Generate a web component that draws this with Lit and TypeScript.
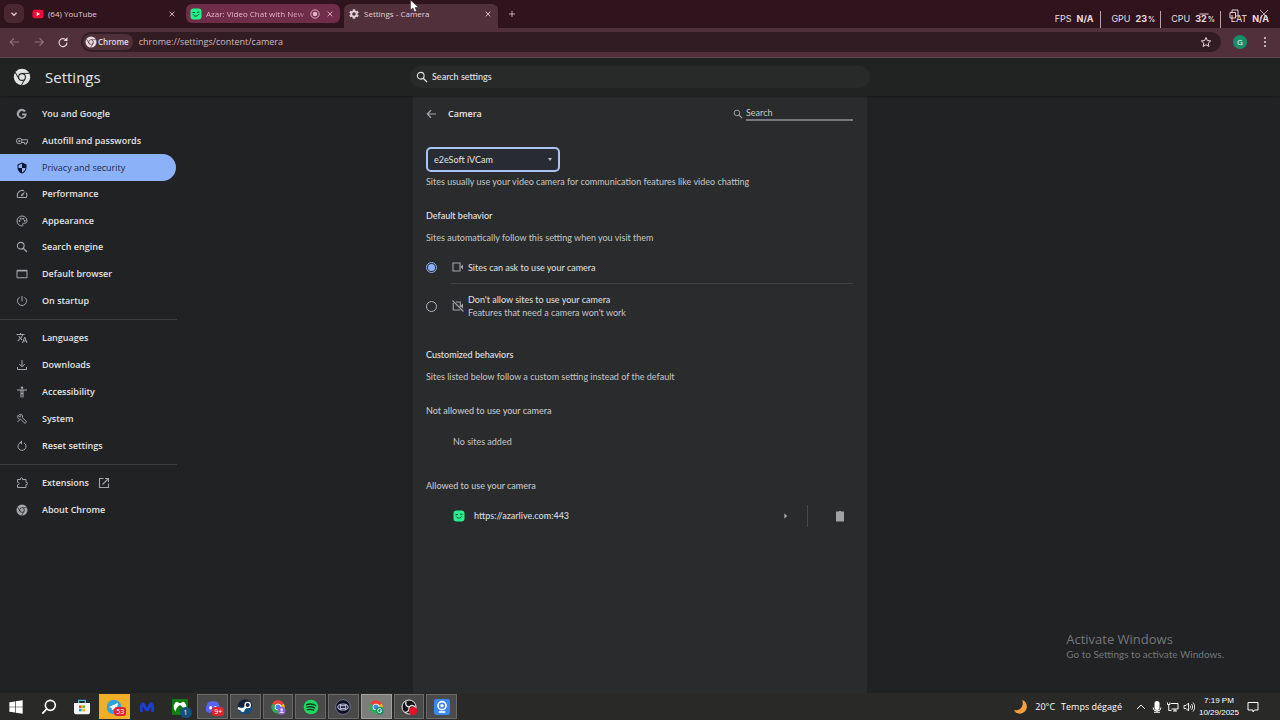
import { LitElement, html, svg, css, nothing, TemplateResult, SVGTemplateResult } from "lit";
import { customElement, state } from "lit/decorators.js";
import { classMap } from "lit/directives/class-map.js";

const wedge = svg`
  <path fill="#ea4335" d="M12 12 3.3 7A10 10 0 0 1 20.7 7z"/>
  <path fill="#fbbc04" d="M12 12 20.7 7A10 10 0 0 1 12 22z"/>
  <path fill="#34a853" d="M12 12 12 22A10 10 0 0 1 3.3 7z"/>
  <circle cx="12" cy="12" r="5" fill="#fff"/><circle cx="12" cy="12" r="3.8" fill="#4285f4"/>`;

const chromeMono = svg`
  <mask id="slits"><rect width="24" height="24" fill="#fff"/>
    <circle cx="12" cy="12" r="5.2" fill="#000"/>
    <g stroke="#000" stroke-width="1.2">
      <path d="M12 7.2H22"/><path d="M12 7.2H22" transform="rotate(120 12 12)"/><path d="M12 7.2H22" transform="rotate(240 12 12)"/>
    </g></mask>
  <circle cx="12" cy="12" r="11" fill="currentColor" mask="url(#slits)"/>
  <circle cx="12" cy="12" r="3.8" fill="currentColor"/>`;

const smile = svg`
  <rect x="1" y="1" width="22" height="22" rx="6" fill="#25f08c"/>
  <path d="M6 9h3M15 8.500h3M6.500 13.500c2 4 8 4 11-.5" fill="none" stroke="#134a35" stroke-width="2" stroke-linecap="round"/>`;

const ICONS: Record<string, SVGTemplateResult> = {
  chevronDown: svg`<path d="m6 9 6 6 6-6" fill="none" stroke="currentColor" stroke-width="3"/>`,
  close: svg`<path d="M5 5 19 19M19 5 5 19" fill="none" stroke="currentColor" stroke-width="2.600"/>`,
  windowClose: svg`<path d="M4 4 20 20M20 4 4 20" fill="none" stroke="currentColor" stroke-width="1.600"/>`,
  plus: svg`<path d="M12 3v18M3 12h18" fill="none" stroke="currentColor" stroke-width="2.400"/>`,
  youtube: svg`<rect x="1" y="3.500" width="22" height="17" rx="4" fill="#f5093a"/><path d="M9.500 8v8l6.500-4z" fill="#fff"/>`,
  smile,
  record: svg`<circle cx="12" cy="12" r="10" fill="none" stroke="currentColor" stroke-width="2.200"/><circle cx="12" cy="12" r="5.500" fill="currentColor"/>`,
  gear: svg`<path fill="currentColor" d="M19.140 12.940c.04-.3.060-.61.060-.94 0-.32-.02-.64-.07-.94l2.030-1.580a.49.490 0 0 0 .12-.61l-1.920-3.320a.49.490 0 0 0-.59-.22l-2.390.96c-.5-.38-1.030-.7-1.620-.94l-.36-2.540a.48.480 0 0 0-.48-.41h-3.840c-.24 0-.43.170-.47.410l-.36 2.540c-.59.240-1.130.57-1.620.94l-2.390-.96a.48.480 0 0 0-.59.220L2.740 8.870c-.12.210-.08.470.12.610l2.030 1.580c-.05.3-.09.630-.09.940s.02.640.07.940l-2.030 1.580a.49.490 0 0 0-.12.610l1.920 3.320c.12.220.37.290.59.220l2.390-.96c.5.380 1.030.7 1.620.94l.36 2.540c.05.240.24.410.48.410h3.840c.24 0 .44-.17.470-.41l.36-2.540c.59-.24 1.130-.56 1.620-.94l2.390.96c.22.080.47 0 .59-.22l1.920-3.320c.12-.22.070-.47-.12-.61zM12 15.600A3.600 3.600 0 1 1 12 8.400a3.600 3.600 0 0 1 0 7.200z"/>`,
  back: svg`<path d="M20 12H3M10 4.500 2.500 12l7.500 7.500" fill="none" stroke="currentColor" stroke-width="2.200"/>`,
  forward: svg`<path d="M3 12h17M13 4.500 20.500 12 13 19.500" fill="none" stroke="currentColor" stroke-width="2.200"/>`,
  reload: svg`<path d="M18.500 8.500A8 8 0 1 0 20 13" fill="none" stroke="currentColor" stroke-width="2.200"/><path d="M21 2.500v7.500h-7.500z" fill="currentColor"/>`,
  chrome: chromeMono,
  star: svg`<path d="m12 3 2.700 6.200 6.800.6-5.100 4.500 1.500 6.600L12 17.400l-5.900 3.500 1.500-6.600-5.100-4.500 6.800-.6z" fill="none" stroke="currentColor" stroke-width="2"/>`,
  dots: svg`<g fill="currentColor"><circle cx="12" cy="4" r="2"/><circle cx="12" cy="12" r="2"/><circle cx="12" cy="20" r="2"/></g>`,
  search: svg`<circle cx="9.500" cy="9.500" r="6.700" fill="none" stroke="currentColor" stroke-width="2.200"/><path d="m14 14 8 8" stroke="currentColor" stroke-width="2.600"/>`,
  google: svg`<path d="M20 6.200A10 10 0 1 0 21.500 11H12v3.600h5.400A5.800 5.800 0 1 1 16 8z" fill="currentColor" fill-rule="evenodd"/>`,
  key: svg`<g fill="none" stroke="currentColor" stroke-width="2"><circle cx="6.500" cy="12" r="5.500"/><path d="M12 9.500h11v5.500H21V18h-4v-3h-5"/></g><circle cx="6.500" cy="12" r="2.200" fill="currentColor"/>`,
  shield: svg`<path fill="currentColor" d="M12 1 3 5v6c0 5.550 3.840 10.740 9 12 5.160-1.260 9-6.450 9-12V5zm0 11h7c-.53 4.120-3.280 7.790-7 8.940V12H5V6.300l7-3.110z"/>`,
  gauge: svg`<path d="M16 5.500A10 10 0 0 0 3.500 19H20.500A10 10 0 0 0 20.500 9.500" fill="none" stroke="currentColor" stroke-width="2.200"/><path d="M19 6 13.500 15.500a2 2 0 1 1-3-2.500z" fill="currentColor"/>`,
  palette: svg`<path d="M12 2a10 10 0 0 0 0 20c1.400 0 2.200-1 1.800-2.200-.7-1.800.2-3.500 2-3.500H18c2.500 0 4-1.800 4-4.300C22 6 17.500 2 12 2z" fill="none" stroke="currentColor" stroke-width="2"/><g fill="currentColor"><circle cx="7" cy="12" r="1.800"/><circle cx="9.500" cy="7.500" r="1.800"/><circle cx="14.500" cy="7.500" r="1.800"/><circle cx="17.500" cy="11.500" r="1.800"/></g>`,
  window: svg`<path d="M2 4.500h20v15H2z" fill="none" stroke="currentColor" stroke-width="2"/><path d="M2 5.500h20" stroke="currentColor" stroke-width="3"/>`,
  power: svg`<path d="M12 2v10.500M7 4.500a9 9 0 1 0 10 0" fill="none" stroke="currentColor" stroke-width="2"/>`,
  translate: svg`<path fill="currentColor" d="m12.870 15.070-2.540-2.510.03-.03A17.520 17.520 0 0 0 14.070 6H17V4h-7V2H8v2H1v2h11.170C11.500 7.920 10.440 9.750 9 11.350 8.070 10.320 7.300 9.190 6.690 8h-2c.73 1.630 1.730 3.170 2.980 4.560l-5.090 5.020L4 19l5-5 3.110 3.110zM18.500 10h-2L12 22h2l1.120-3h4.750L21 22h2zm-2.620 7 1.620-4.330L19.120 17z"/>`,
  download: svg`<path d="M12 2v13M6.500 10l5.500 5.500 5.500-5.500M3 16v5h18v-5" fill="none" stroke="currentColor" stroke-width="2"/>`,
  person: svg`<circle cx="12" cy="3.500" r="2.500" fill="currentColor"/><path d="M2 8h20" stroke="currentColor" stroke-width="2.200"/><path d="M10 8v15M14 8v15M10 15h4" fill="none" stroke="currentColor" stroke-width="2.200"/>`,
  wrench: svg`<path d="M4 4.500 8 8.500 9 5.500 6.500 3c4-1.500 8 1.500 6.500 6.500l8 8-3 3.500-8.500-8.500C5 14 2 9 4 4.500zM3 18l4-4" fill="none" stroke="currentColor" stroke-width="2"/>`,
  reset: svg`<path d="M8 5.800a8 8 0 1 0 8 0" fill="none" stroke="currentColor" stroke-width="2"/><path d="M12 1v8L7 5z" fill="currentColor"/>`,
  puzzle: svg`<path d="M3 5h6V3.500a2 2 0 0 1 4 0V5h7v6h1.500a2 2 0 0 1 0 4H20v6H3v-5.500c4.500-.5 4.500-4.500 0-5z" fill="none" stroke="currentColor" stroke-width="2"/>`,
  external: svg`<path d="M11 3H3v18h18v-8M14 3h7v7M21 3 9 15" fill="none" stroke="currentColor" stroke-width="2.200"/>`,
  camera: svg`<path d="M2 4h14v16H2z" fill="none" stroke="currentColor" stroke-width="2.200"/><path d="M16.500 12 22 7v10z" fill="currentColor"/>`,
  cameraOff: svg`<path d="M8 4h8.500v10M2.500 6v14h14" fill="none" stroke="currentColor" stroke-width="2.200"/><path d="M16.500 12 22 7v10z" fill="currentColor"/><path d="m1 1 22 22" stroke="currentColor" stroke-width="2.200"/>`,
  arrowRight: svg`<path d="m8 6 7 6-7 6z" fill="currentColor"/>`,
  trash: svg`<path d="M4 6h16v16a1 1 0 0 1-1 1H5a1 1 0 0 1-1-1zM4 3h5l1-1h4l1 1h5v3H4z" fill="currentColor"/>`,
  moon: svg`<path d="M14 1c7 3 9 12 4 17.500S4 23 1.500 16.500C9 19 17 12 14 1z" fill="#f5a03a"/>`,
  caretUp: svg`<path d="m4 16 8-8 8 8" fill="none" stroke="currentColor" stroke-width="2"/>`,
  mic: svg`<rect x="7" y="0" width="10" height="18" rx="5" fill="currentColor"/><path d="M4 13a8 7 0 0 0 16 0M12 19v3M6 22.500h12" fill="none" stroke="currentColor" stroke-width="2"/>`,
  network: svg`<path d="M8 5h14v11H9M1 3v4h5V3M3.500 7v12H9M12 20h8M16 16v4" fill="none" stroke="currentColor" stroke-width="2"/>`,
  volume: svg`<path d="M2 9h4l5-5v16l-5-5H2z" fill="none" stroke="currentColor" stroke-width="1.800"/><path d="M14 9c1.500 2 1.500 4 0 6M17 6c3 4 3 8 0 12M20 3c4.500 6 4.500 12 0 18" fill="none" stroke="currentColor" stroke-width="1.800"/>`,
  notes: svg`<path d="M2 3h20v15h-7l-3 4v-4H2z" fill="none" stroke="currentColor" stroke-width="2"/>`,
  windows: svg`<path fill="currentColor" d="m2 5 8.500-1.300V11.500H2zM11.500 3.500 22 2v9.500H11.500zM2 12.500h8.500v7.800L2 19zM11.500 12.500H22V22l-10.500-1.500z"/>`,
  taskSearch: svg`<circle cx="14" cy="9.500" r="7.500" fill="none" stroke="currentColor" stroke-width="2.400"/><path d="m8.500 15-6.500 7" stroke="currentColor" stroke-width="2.600"/>`,
  store: svg`<path d="M7 6V2h10v4" fill="none" stroke="#4cb8d8" stroke-width="2"/><path d="M0 6h24v13a4 4 0 0 1-4 4H4a4 4 0 0 1-4-4z" fill="#f4f4f4"/><path d="M7.500 9.500h4v4h-4z" fill="#f25022"/><path d="M12.500 9.500h4v4h-4z" fill="#7fba00"/><path d="M7.500 14.500h4v4h-4z" fill="#00a4ef"/><path d="M12.500 14.500h4v4h-4z" fill="#ffb900"/>`,
  telegram: svg`<circle cx="12" cy="12" r="11" fill="#2da5dc"/><path d="m4.500 12 13.500-6-2.500 12-4.500-3-2 2-.5-3.500z" fill="#fff"/>`,
  malware: svg`<path d="M2 20C0 12 2 6 6 5c3 0 4 5 6 8 2-3 3-8 6-8 4 1 6 7 4 15l-4-1 .5-8-4 7h-5l-4-7 .5 8z" fill="#1a3fd0"/>`,
  xbox: svg`<rect width="24" height="24" fill="#107c10"/><circle cx="12" cy="12" r="9.500" fill="#fff"/><path d="M5 19c1-5 4-8 7-10 3 2 6 5 7 10-4 3.500-10 3.500-14 0zM6 4.500c2-.5 4 .5 6 2 2-1.500 4-2.500 6-2-3.500-2.700-8.500-2.700-12 0z" fill="#107c10"/>`,
  discord: svg`<path d="M5 4.500C9 3 15 3 19 4.500c3 4.500 4 9 3.500 14-2 1.500-4 2.500-6 3l-1.500-2.500H9L7.500 21.500c-2-.5-4-1.500-6-3C1 13.500 2 9 5 4.500z" fill="#5865f2"/><ellipse cx="8.500" cy="13" rx="2.200" ry="2.600" fill="#fff"/><ellipse cx="15.500" cy="13" rx="2.200" ry="2.600" fill="#fff"/>`,
  steam: svg`<circle cx="12" cy="12" r="11" fill="#12507f"/><path d="M1 12a11 11 0 0 1 22-1z" fill="#14203c"/><path d="M1.500 13.500 8.500 16.500 15.500 9.500" stroke="#fff" stroke-width="3.500" fill="none"/><circle cx="16" cy="9" r="4" fill="#14203c" stroke="#fff" stroke-width="2"/><circle cx="8.500" cy="16.500" r="3" fill="#fff"/>`,
  chromeUser: svg`${wedge}<circle cx="17.500" cy="17.500" r="6" fill="#8a63c9"/><circle cx="17.500" cy="16" r="2" fill="#e9defa"/><path d="M14 21c1-3 6-3 7 0z" fill="#e9defa"/>`,
  chromeG: svg`${wedge}<circle cx="17.500" cy="17.500" r="6" fill="#159268"/><path d="M20 15.800a3 3 0 1 0 .4 2H18" fill="none" stroke="#fff" stroke-width="1.400"/>`,
  spotify: svg`<circle cx="12" cy="12" r="11" fill="#1ed760"/><path d="M5.500 8.500c4.500-1.500 9.500-1 13.500 1.200M6 12.300c4-1.200 8-.8 11.500 1M6.500 16c3.300-.9 6.700-.6 9.500.8" fill="none" stroke="#16351f" stroke-width="2" stroke-linecap="round"/>`,
  eye: svg`<circle cx="12" cy="12" r="11" fill="#0e1024" stroke="#8f90a8" stroke-width="1"/><path d="M4 12c2-6 14-6 16 0-2 6-14 6-16 0z" fill="none" stroke="#b9bad8" stroke-width="1.600"/><rect x="8" y="10" width="8" height="4" fill="none" stroke="#c9cae8" stroke-width="1.500"/>`,
  obs: svg`<circle cx="12" cy="12" r="10.500" fill="#15131a" stroke="#e8e8e8" stroke-width="1.500"/><path d="M12 12C7 11 6 7 8 3.500M12 12c4-4 8-2 9.500 1M12 12c1 5-2 8-6 8" stroke="#e8e8e8" stroke-width="2" fill="none"/><circle cx="18" cy="18" r="6" fill="#e81123"/>`,
  webcam: svg`<rect width="24" height="24" rx="4" fill="#3c86f0"/><circle cx="12" cy="10" r="6" fill="none" stroke="#fff" stroke-width="2.500"/><circle cx="12" cy="10" r="2.500" fill="#fff"/><path d="M7 19.500h10" stroke="#fff" stroke-width="2.500"/>`,
  minimize: svg`<path d="M3 12h18" stroke="currentColor" stroke-width="2"/>`,
  restore: svg`<path d="M4 9h11v11H4zM8 9V4h12v12h-5" fill="none" stroke="currentColor" stroke-width="2"/>`,
  cursor: svg`<path d="M3 0v20l5-4 3 8 4-2-3-7h7z" fill="#fff" stroke="#222" stroke-width="1"/>`,
};

function icon(name: string, size = "s12"): TemplateResult {
  return html`<svg class="ico ${size}" viewBox="0 0 24 24" aria-hidden="true">${ICONS[name]}</svg>`;
}

interface NavItem { icon: string; label: string; external?: boolean; }

const NAV: NavItem[][] = [
  [
    { icon: "google", label: "You and Google" },
    { icon: "key", label: "Autofill and passwords" },
    { icon: "shield", label: "Privacy and security" },
    { icon: "gauge", label: "Performance" },
    { icon: "palette", label: "Appearance" },
    { icon: "search", label: "Search engine" },
    { icon: "window", label: "Default browser" },
    { icon: "power", label: "On startup" },
  ],
  [
    { icon: "translate", label: "Languages" },
    { icon: "download", label: "Downloads" },
    { icon: "person", label: "Accessibility" },
    { icon: "wrench", label: "System" },
    { icon: "reset", label: "Reset settings" },
  ],
  [
    { icon: "puzzle", label: "Extensions", external: true },
    { icon: "chrome", label: "About Chrome" },
  ],
];

interface Task { icon: string; label: string; kind?: string; badge?: string; badgeKind?: string; }

const TASKS: Task[] = [
  { icon: "windows", label: "Start" },
  { icon: "taskSearch", label: "Search" },
  { icon: "store", label: "Microsoft Store" },
  { icon: "telegram", label: "Telegram", kind: "alert", badge: "53", badgeKind: "red" },
  { icon: "malware", label: "Malwarebytes" },
  { icon: "xbox", label: "Xbox", badge: "1", badgeKind: "blue" },
  { icon: "discord", label: "Discord", kind: "open", badge: "9+", badgeKind: "red" },
  { icon: "steam", label: "Steam", kind: "open" },
  { icon: "chromeUser", label: "Chrome, second profile", kind: "open" },
  { icon: "spotify", label: "Spotify", kind: "open" },
  { icon: "eye", label: "Viewer", kind: "open" },
  { icon: "chromeG", label: "Chrome", kind: "front" },
  { icon: "obs", label: "OBS Studio", kind: "open" },
  { icon: "webcam", label: "iVCam", kind: "open" },
];

const STATS = [
  { name: "FPS", value: "N/A", unit: "" },
  { name: "GPU", value: "23", unit: "%" },
  { name: "CPU", value: "32", unit: "%" },
  { name: "LAT", value: "N/A", unit: "" },
];

@customElement("app-root")
export class AppRoot extends LitElement {
  @state() private section = "Privacy and security";
  @state() private allow = true;

  static styles = css`
    :host {
      display: flex;
      flex-direction: column;
      height: 100vh;
      overflow: hidden;
      position: relative;
      background: #202224;
      color: #e3e3e3;
      font: 9px/14px "Open Sans", "Noto Sans", sans-serif;
    }
    * { box-sizing: border-box; }
    button, input, select {
      font: inherit;
      color: inherit;
      background: none;
      border: 0;
      margin: 0;
      padding: 0;
      outline: 0;
    }
    button { display: grid; place-items: center; }
    a { color: inherit; text-decoration: none; }
    h1, h2, h3, p, ul { margin: 0; padding: 0; font: inherit; }
    ul { list-style: none; }
    .ico { display: block; flex: none; }
    .s8 { width: 8px; height: 8px; }
    .s10 { width: 10px; height: 10px; }
    .s12 { width: 12px; height: 12px; }
    .s16 { width: 16px; height: 16px; }
    .s18 { width: 18px; height: 18px; }

    .tabs {
      display: flex;
      align-items: flex-start;
      gap: 4px;
      height: 28px;
      padding: 4px 4px 0;
      background: #2f141d;
      color: #e2cfd5;
      font-size: 8px;
    }
    .tab-menu { width: 20px; height: 19px; border-radius: 6px; background: #4a2832; }
    .tab {
      display: flex;
      align-items: center;
      gap: 4px;
      width: 154px;
      height: 19px;
      padding: 0 4px;
      border-radius: 6px;
    }
    .tab.media { background: #702d4a; color: #e5b6c8; }
    .tab.front { height: 24px; padding-bottom: 5px; border-radius: 6px 6px 0 0; background: #51303b; }
    .tab-title { flex: 1; white-space: nowrap; }
    .media .tab-title { mask-image: linear-gradient(90deg, #000 85%, #0006); }
    .tab button, .new-tab { width: 12px; height: 19px; }
    .new-tab { margin-left: 4px; }
    .window-buttons { display: flex; gap: 18px; margin-left: auto; padding: 4px 6px 0 0; }

    .toolbar {
      display: flex;
      align-items: center;
      gap: 12px;
      height: 30px;
      padding: 0 9px 1px;
      background: #51303b;
      border-bottom: 1px solid #5c4a50;
      color: #ead9de;
    }
    .toolbar .dim { color: #8d6f79; }
    .omnibox {
      flex: 1;
      display: flex;
      align-items: center;
      gap: 6px;
      height: 20px;
      padding: 0 9px 0 2px;
      border-radius: 10px;
      background: #321c24;
    }
    .chip { display: flex; align-items: center; gap: 1px; height: 16px; padding: 0 4px 0 2px; border-radius: 8px; background: #4d303a; font-size: 8px; font-weight: 600; }
    .omnibox input { flex: 1; min-width: 0; color: #cdb9bf; }
    .avatar { width: 14px; height: 14px; border-radius: 7px; background: #168f68; color: #fff; font-size: 8px; }

    .overlay {
      position: absolute;
      top: 11px;
      right: 11px;
      display: flex;
      font: 9px/16px Inter, sans-serif;
      color: #eadde1;
    }
    .stat { display: flex; align-items: baseline; gap: 5px; padding-left: 10px; }
    .stat + .stat { margin-left: 7px; border-left: 1px solid #b8a3aa; }
    .stat b { font-weight: 700; }
    .stat small { font-size: 7px; font-weight: 700; margin: 0 -2px 0 -4px; }
    .cursor { position: absolute; top: 0; left: 409px; }

    .header {
      display: grid;
      grid-template-columns: 1fr 460px 1fr;
      align-items: center;
      height: 38px;
      background: #212323;
      position: relative;
      box-shadow: 0 1px 2px #0005;
    }
    .brand { display: flex; align-items: center; gap: 14px; padding-left: 13px; }
    .brand h1 { font-size: 15px; line-height: 20px; font-weight: 500; }
    .search { display: flex; align-items: center; gap: 4px; height: 22px; padding: 0 6px; border-radius: 11px; background: #282929; font-family: Lato, sans-serif; font-weight: 500; }
    .search input { flex: 1; min-width: 0; }
    input::placeholder { color: inherit; opacity: 1; }

    .body { flex: 1; min-height: 0; display: grid; grid-template-columns: 1fr 454px 1fr; }
    .side { padding-top: 5px; }
    .group { display: grid; grid-auto-rows: 1fr; width: 177px; }
    .group + .group { border-top: 1px solid #3c3e40; margin-top: 5px; padding-top: 5px; }
    .g8 { height: 213px; }
    .g5 { height: 140px; }
    .g2 { height: 59px; }
    .nav {
      display: flex;
      align-items: center;
      gap: 14px;
      height: 100%;
      width: 176px;
      padding-left: 16px;
      border-radius: 0 14px 14px 0;
      font-weight: 600;
    }
    .nav .ico { color: #a3a6a9; }
    .nav .ext { margin-left: -5px; }
    .nav.current { background: #8bb2f8; color: #1d2a48; font-weight: 500; }
    .nav.current .ico { color: #0a1530; }

    .card { background: #292b2c; padding: 8px 14px 0 13px; font-family: Lato, "Open Sans", sans-serif; }
    .title { display: flex; align-items: center; gap: 10px; height: 20px; color: #a5a8aa; }
    .title h2 { flex: 1; color: #e8e8e8; font-family: "Open Sans", sans-serif; font-weight: 600; }
    .find { display: flex; align-items: center; gap: 3px; }
    .find input { width: 107px; height: 13px; border-bottom: 2px solid #77797a; color: #c8cacb; }
    .pick { position: relative; width: 134px; margin-top: 23px; }
    .pick select {
      display: block;
      width: 100%;
      height: 25px;
      padding: 0 6px;
      border: 2px solid #a9c3f2;
      border-radius: 5px;
      background: #282b34;
      appearance: none;
    }
    .pick .caret { position: absolute; right: 8px; top: 11px; border: 2px solid transparent; border-top: 3px solid #b9bcc0; }
    .muted { color: #c4c7c9; }
    .below { margin-top: 3px; }
    .sub { margin-top: 8px; }
    .section { margin-top: 20px; font-weight: 500; }
    .choices { border: 0; margin: 0; padding: 0 0 6px; }
    .choice { display: flex; align-items: center; margin-top: 6px; height: 32px; }
    .choice .ico { margin: 0 4px 0 15px; color: #a3a6a9; }
    .choice input { appearance: none; width: 11px; height: 11px; border: 1px solid #b4b7ba; border-radius: 50%; display: grid; place-items: center; }
    .choice input:checked { border-color: #8bb2f8; }
    .choice input:checked::after { content: ""; width: 7px; height: 7px; border-radius: 50%; background: #8bb2f8; }
    .choice span { line-height: 13px; }
    .rule { border-top: 1px solid #3e4042; margin-left: 24px; }
    .choice small { display: block; font-size: inherit; color: #c4c7c9; }
    .empty { padding: 17px 0 10px 27px; }
    .site { display: flex; align-items: center; height: 22px; margin-top: 12px; padding: 0 7px 0 27px; color: #dcdee0; }
    .site a { flex: 1; margin-left: 9px; font-weight: 500; }
    .site .more { margin-right: 16px; color: #a9abad; }
    .site .del { padding-left: 26px; border-left: 1px solid #46484a; height: 22px; color: #a0a2a4; }

    .watermark { position: absolute; right: 56px; bottom: 59px; color: #75777a; font: 10px/14px Lato, sans-serif; }
    .watermark strong { display: block; font: 13px/16px "Open Sans", sans-serif; }

    .taskbar { display: flex; justify-content: space-between; height: 27px; background: #292928; color: #fff; }
    .tasks { display: grid; grid-template-columns: repeat(14, 1fr); width: 458px; }
    .task { position: relative; margin: 1px; }
    .task.open { background: #4a4a4a; outline: 1px solid #6a6a6a; outline-offset: -1px; }
    .task.front { background: #7d7e7c; outline: 1px solid #a0a09e; outline-offset: -1px; }
    .task.alert { background: #f2ae26; }
    .badge { position: absolute; left: 15px; top: 13px; padding: 0 2px; border-radius: 3px; background: #e0262d; color: #fff; font-size: 7px; line-height: 9px; }
    .badge.blue { background: #14507a; border-radius: 6px; padding: 0 4px; line-height: 11px; }
    .tray { display: flex; align-items: center; gap: 4px; padding-right: 21px; }
    .tray .weather { display: flex; align-items: center; gap: 6px; margin-right: 9px; }
    .tray .clock { text-align: center; font: 8px/12px "Liberation Sans", sans-serif; margin-right: 4px; }
  `;

  private renderTabs() {
    return html`<header>
      <div class="tabs">
        <button class="tab-menu" aria-label="Search tabs">${icon("chevronDown", "s10")}</button>
        <div class="tab">
          ${icon("youtube")}<span class="tab-title">(64) YouTube</span>
          <button aria-label="Close tab">${icon("close", "s8")}</button>
        </div>
        <div class="tab media">
          ${icon("smile")}<span class="tab-title">Azar: Video Chat with New</span>
          ${icon("record", "s10")}<button aria-label="Close tab">${icon("close", "s8")}</button>
        </div>
        <div class="tab front">
          ${icon("gear")}<span class="tab-title">Settings - Camera</span>
          <button aria-label="Close tab">${icon("close", "s8")}</button>
        </div>
        <button class="new-tab" aria-label="New tab">${icon("plus", "s8")}</button>
        <div class="window-buttons">
          <button aria-label="Minimize">${icon("minimize")}</button>
          <button aria-label="Restore">${icon("restore")}</button>
          <button aria-label="Close">${icon("windowClose")}</button>
        </div>
      </div>
      <div class="toolbar">
        <button class="dim" aria-label="Back">${icon("back")}</button>
        <button class="dim" aria-label="Forward">${icon("forward")}</button>
        <button aria-label="Reload">${icon("reload")}</button>
        <div class="omnibox">
          <span class="chip">${icon("chrome")}Chrome</span>
          <input aria-label="Address" .value=${"chrome://settings/content/camera"} />
          <button aria-label="Bookmark this page">${icon("star")}</button>
        </div>
        <button class="avatar" aria-label="Profile">G</button>
        <button aria-label="Menu">${icon("dots")}</button>
      </div>
    </header>`;
  }

  private renderNav() {
    return html`<nav class="side">
      ${NAV.map((group) => html`<ul class="group g${group.length}">
        ${group.map((item) => html`<li>
          <a href="#" class=${classMap({ nav: true, current: item.label === this.section })}
            @click=${(e: Event) => { e.preventDefault(); this.section = item.label; }}>
            ${icon(item.icon)}${item.label}
            ${item.external ? html`<span class="ext">${icon("external")}</span>` : nothing}
          </a></li>`)}
      </ul>`)}
    </nav>`;
  }

  private renderCard() {
    return html`<main class="card">
      <div class="title">
        <button aria-label="Back to site settings">${icon("back")}</button>
        <h2>Camera</h2>
        <label class="find">${icon("search", "s10")}<input type="text" placeholder="Search" aria-label="Search" /></label>
      </div>
      <div class="pick">
        <select aria-label="Camera device"><option>e2eSoft iVCam</option></select>
        <span class="caret"></span>
      </div>
      <p class="muted below">Sites usually use your video camera for communication features like video chatting</p>
      <h3 class="section">Default behavior</h3>
      <p class="muted sub">Sites automatically follow this setting when you visit them</p>
      <fieldset class="choices" aria-label="Default behavior">
        <label class="choice">
          <input type="radio" name="mode" .checked=${this.allow} @change=${() => (this.allow = true)} />
          ${icon("camera")}<span>Sites can ask to use your camera</span>
        </label>
        <div class="rule"></div>
        <label class="choice">
          <input type="radio" name="mode" .checked=${!this.allow} @change=${() => (this.allow = false)} />
          ${icon("cameraOff")}<span>Don't allow sites to use your camera<small>Features that need a camera won't work</small></span>
        </label>
      </fieldset>
      <h3 class="section">Customized behaviors</h3>
      <p class="muted sub">Sites listed below follow a custom setting instead of the default</p>
      <p class="muted section">Not allowed to use your camera</p>
      <p class="muted empty">No sites added</p>
      <p class="muted section">Allowed to use your camera</p>
      <div class="site">
        ${icon("smile")}<a href="#">https://azarlive.com:443</a>
        <button class="more" aria-label="Site details">${icon("arrowRight", "s10")}</button>
        <button class="del" aria-label="Remove site">${icon("trash")}</button>
      </div>
    </main>`;
  }

  private renderTaskbar() {
    return html`<footer class="taskbar">
      <div class="tasks">
        ${TASKS.map((t) => html`<button class="task ${t.kind ?? ""}" aria-label=${t.label}>
          ${icon(t.icon, "s16")}
          ${t.badge ? html`<span class="badge ${t.badgeKind}">${t.badge}</span>` : nothing}
        </button>`)}
      </div>
      <div class="tray">
        <div class="weather">${icon("moon", "s16")}<span>20°C</span><span>Temps dégagé</span></div>
        ${icon("caretUp")}${icon("mic")}${icon("network")}${icon("volume")}
        <time class="clock">7:19 PM<br />10/29/2025</time>
        ${icon("notes")}
      </div>
    </footer>`;
  }

  render() {
    return html`
      ${this.renderTabs()}
      <div class="header">
        <div class="brand">${icon("chrome", "s18")}<h1>Settings</h1></div>
        <label class="search">${icon("search")}<input type="text" placeholder="Search settings" aria-label="Search settings" /></label>
      </div>
      <div class="body">${this.renderNav()}${this.renderCard()}</div>
      ${this.renderTaskbar()}
      <div class="overlay">
        ${STATS.map((s) => html`<div class="stat"><span>${s.name}</span><b>${s.value}</b>${s.unit ? html`<small>${s.unit}</small>` : nothing}</div>`)}
      </div>
      <div class="watermark"><strong>Activate Windows</strong>Go to Settings to activate Windows.</div>
      <div class="cursor">${icon("cursor")}</div>
    `;
  }
}
